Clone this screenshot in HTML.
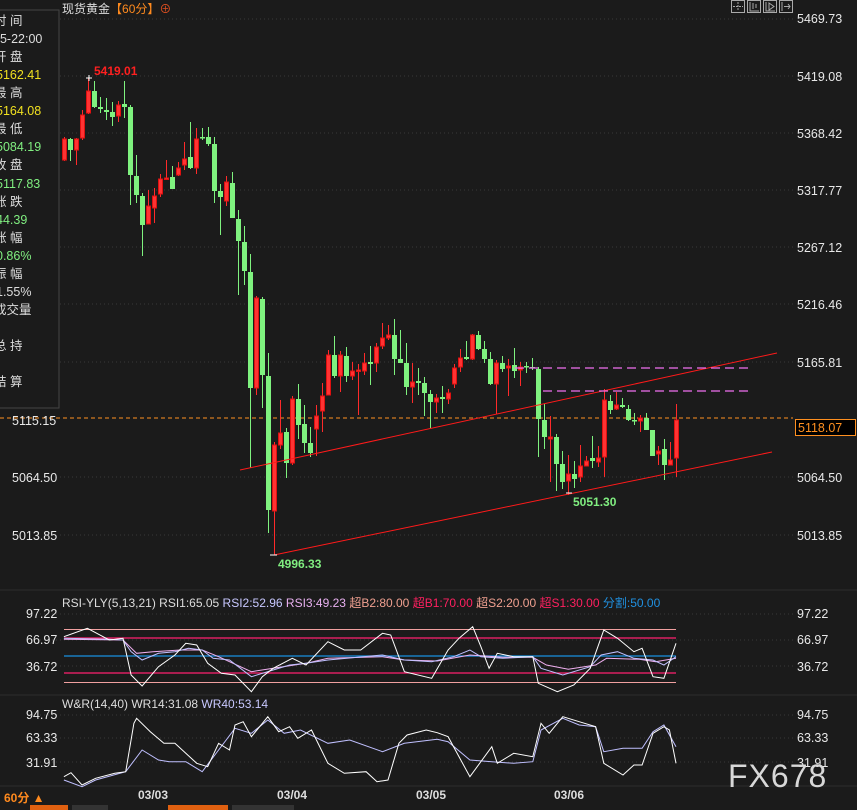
<!DOCTYPE html>
<html><head><meta charset="utf-8"><style>
html,body{margin:0;padding:0;background:#1b1b1b;}
body{width:857px;height:810px;overflow:hidden;position:relative;font-family:"Liberation Sans","Noto Sans CJK SC",sans-serif;}
svg{position:absolute;left:0;top:0;}
</style></head><body>
<svg id="s" width="857" height="810" xmlns="http://www.w3.org/2000/svg" font-family="Liberation Sans, Noto Sans CJK SC, sans-serif">
<rect width="857" height="810" fill="#1b1b1b"/>
<rect x="-2" y="10" width="61" height="398" fill="none" stroke="#444" stroke-width="1"/>
<g font-size="12.5" fill="#ddd">
<text x="-6" y="25">时 间</text>
<text x="-7" y="43">05-22:00</text>
<text x="-6" y="61">开 盘</text>
<text x="-4" y="79" fill="#f0e020">5162.41</text>
<text x="-6" y="97">最 高</text>
<text x="-4" y="115" fill="#f0e020">5164.08</text>
<text x="-6" y="133">最 低</text>
<text x="-4" y="151" fill="#80ee80">5084.19</text>
<text x="-6" y="169">收 盘</text>
<text x="-4" y="188" fill="#80ee80">5117.83</text>
<text x="-6" y="206">涨 跌</text>
<text x="-4" y="224" fill="#80ee80">44.39</text>
<text x="-6" y="242">涨 幅</text>
<text x="-4" y="260" fill="#80ee80">0.86%</text>
<text x="-6" y="278">振 幅</text>
<text x="-4" y="296">1.55%</text>
<text x="-6" y="314">成交量</text>
<text x="-4" y="332">-</text>
<text x="-6" y="350">总 持</text>
<text x="-4" y="368">-</text>
<text x="-6" y="386">结 算</text>
<text x="-4" y="404">-</text>
</g>
<text x="62" y="13" font-size="12" fill="#ddd">现货黄金<tspan fill="#ff8a1e">【60分】</tspan><tspan fill="#e05020">⊕</tspan></text>
<g stroke="#aaa" fill="none" stroke-width="1">
<rect x="731.5" y="0.5" width="13" height="12"/><rect x="747.5" y="0.5" width="13" height="12"/><rect x="763.5" y="0.5" width="13" height="12"/><rect x="779.5" y="0.5" width="13" height="12"/>
<path d="M738 2v9M733 6.5h10" stroke-dasharray="2,1"/>
<path d="M750 2v9h9M753 3v6M756 4v4"/>
<path d="M766 2v9h9M769 3l5 3.5-5 3.5z"/>
<path d="M782 2v9M784 6.5h6M788 4l2 2.5-2 2.5"/>
</g>
<g stroke="#3a3a3a" stroke-dasharray="1,3">
<line x1="60" y1="19" x2="793" y2="19"/><line x1="60" y1="76" x2="793" y2="76"/><line x1="60" y1="133" x2="793" y2="133"/><line x1="60" y1="190" x2="793" y2="190"/><line x1="60" y1="247" x2="793" y2="247"/><line x1="60" y1="304" x2="793" y2="304"/><line x1="60" y1="362" x2="793" y2="362"/><line x1="60" y1="477" x2="793" y2="477"/><line x1="60" y1="535" x2="793" y2="535"/>
<line x1="40" y1="614" x2="793" y2="614"/><line x1="40" y1="640" x2="793" y2="640"/><line x1="40" y1="666" x2="793" y2="666"/>
<line x1="40" y1="715" x2="793" y2="715"/><line x1="40" y1="738" x2="793" y2="738"/><line x1="40" y1="762" x2="793" y2="762"/>
</g>
<line x1="0" y1="418" x2="793" y2="418" stroke="#ff9020" stroke-dasharray="4,3"/>
<g font-size="12.5" fill="#e8e8e8">
<text x="797" y="23">5469.73</text><text x="797" y="81">5419.08</text><text x="797" y="138">5368.42</text><text x="797" y="195">5317.77</text><text x="797" y="252">5267.12</text><text x="797" y="309">5216.46</text><text x="797" y="367">5165.81</text><text x="797" y="482">5064.50</text><text x="797" y="540">5013.85</text>
<text x="12" y="425">5115.15</text><text x="12" y="482">5064.50</text><text x="12" y="540">5013.85</text>
</g>
<rect x="795.5" y="419.5" width="60" height="16" fill="#000" stroke="#ff9020"/>
<text x="798" y="432" font-size="12.5" fill="#ff9020">5118.07</text>
<g id="candles"></g>
<line x1="240" y1="470" x2="777" y2="353" stroke="#ff1a1a" stroke-width="1"/>
<line x1="274" y1="555" x2="772" y2="452" stroke="#ff1a1a" stroke-width="1"/>
<line x1="515" y1="368" x2="753" y2="368" stroke="#f070f0" stroke-width="1.3" stroke-dasharray="9,5"/>
<line x1="543" y1="391" x2="753" y2="391" stroke="#f070f0" stroke-width="1.3" stroke-dasharray="9,5"/>
<text x="94" y="75" font-size="12" font-weight="bold" fill="#ff2020">5419.01</text>
<text x="278" y="568" font-size="12" font-weight="bold" fill="#80ee80">4996.33</text>
<text x="573" y="506" font-size="12" font-weight="bold" fill="#80ee80">5051.30</text>
<path d="M86 78h6M89 75v6M270 555h7M566 493h6" stroke="#fff"/>
<line x1="0" y1="590" x2="857" y2="590" stroke="#2c2c2c"/>
<line x1="0" y1="695" x2="857" y2="695" stroke="#2c2c2c"/>
<line x1="0" y1="786" x2="857" y2="786" stroke="#2c2c2c"/>
<text x="62" y="607" font-size="12" fill="#ddd">RSI-YLY(5,13,21) RSI1:65.05 <tspan fill="#c8c8ff">RSI2:52.96</tspan> <tspan fill="#e8b0f0">RSI3:49.23</tspan> <tspan fill="#f0a090">超B2:80.00</tspan> <tspan fill="#ff2060">超B1:70.00</tspan> <tspan fill="#f0a090">超S2:20.00</tspan> <tspan fill="#ff2060">超S1:30.00</tspan> <tspan fill="#2090e0">分割:50.00</tspan></text>
<g font-size="12.5" fill="#e8e8e8">
<text x="26" y="618">97.22</text><text x="26" y="644">66.97</text><text x="26" y="671">36.72</text>
<text x="797" y="618">97.22</text><text x="797" y="644">66.97</text><text x="797" y="671">36.72</text>
<text x="26" y="719">94.75</text><text x="26" y="742">63.33</text><text x="26" y="767">31.91</text>
<text x="797" y="719">94.75</text><text x="797" y="742">63.33</text><text x="797" y="767">31.91</text>
</g>
<line x1="64" y1="629.5" x2="676" y2="629.5" stroke="#f0a0a0"/>
<line x1="64" y1="682.5" x2="676" y2="682.5" stroke="#f0a0a0"/>
<line x1="64" y1="638" x2="676" y2="638" stroke="#ff2070" stroke-width="1.3"/>
<line x1="64" y1="673" x2="676" y2="673" stroke="#ff2070" stroke-width="1.3"/>
<line x1="64" y1="656" x2="676" y2="656" stroke="#1890e0" stroke-width="1.3"/>
<g id="ind" fill="none"></g>
<text x="62" y="708" font-size="12" fill="#ddd">W&amp;R(14,40) WR14:31.08 <tspan fill="#c8c8ff">WR40:53.14</tspan></text>
<text x="728" y="787" font-size="32" fill="#d8d8d8" letter-spacing="1">FX678</text>
<g font-size="12" font-weight="bold" fill="#ddd">
<text x="138" y="799">03/03</text><text x="277" y="799">03/04</text><text x="416" y="799">03/05</text><text x="554" y="799">03/06</text>
</g>
<text x="4" y="802" font-size="12" font-weight="bold" fill="#ff8a1e">60分 ▲</text>
<rect x="30" y="805" width="38" height="5" fill="#e06010"/><rect x="72" y="805" width="36" height="5" fill="#333"/><rect x="168" y="805" width="60" height="5" fill="#e06010"/><rect x="232" y="805" width="62" height="5" fill="#333"/>
</svg>
<script>
var C=[
[64,'r',139,160,137,161],[70,'g',139,150,138,161],[76,'r',139,150,138,165],[82,'r',115,138,110,140],[88,'r',91,113,78,114],[94,'g',91,107,81,108],[100,'g',107,109,97,113],[106,'g',110,112,98,120],[112,'g',112,117,102,126],[118,'r',105,116,101,122],[124,'g',104,107,81,118],[130,'g',107,175,105,205],[136,'g',176,195,155,203],[142,'g',196,225,193,256],[148,'r',206,224,190,224],[154,'r',196,208,188,223],[160,'r',179,194,174,197],[166,'r',178,179,160,180],[172,'g',177,189,166,189],[178,'r',168,175,162,176],[184,'r',159,165,142,170],[190,'g',157,168,122,169],[196,'r',139,168,128,174],[202,'g',137,138,128,140],[208,'g',137,144,127,146],[214,'g',144,191,137,203],[220,'g',191,197,184,235],[226,'r',182,201,176,206],[232,'g',183,218,172,218],[238,'g',219,241,210,295],[244,'g',242,271,226,285],[250,'g',272,388,254,468],[256,'r',298,388,296,395],[262,'g',299,375,297,408],[268,'g',376,510,353,533],[274,'r',445,511,442,555],[280,'r',433,445,400,449],[286,'g',432,463,428,478],[292,'r',399,463,396,465],[298,'g',399,425,384,439],[304,'g',424,443,405,453],[310,'g',443,453,427,457],[316,'r',416,429,405,456],[322,'r',396,411,383,432],[328,'r',355,395,350,395],[334,'g',355,376,336,378],[340,'r',355,376,351,392],[346,'g',356,376,347,382],[352,'r',371,376,362,380],[358,'r',370,371,364,415],[364,'r',363,371,353,375],[370,'g',362,364,346,385],[376,'r',347,363,343,372],[382,'r',338,346,323,349],[388,'r',335,338,325,340],[394,'g',335,359,319,375],[400,'g',359,363,330,363],[406,'g',363,387,343,395],[412,'r',382,387,363,403],[418,'g',381,383,368,395],[424,'g',383,393,377,416],[430,'g',394,402,390,428],[436,'r',398,402,394,413],[442,'g',397,399,386,413],[448,'r',393,399,389,404],[454,'r',368,384,364,388],[460,'r',358,367,349,372],[466,'g',357,359,341,360],[472,'r',335,359,334,360],[478,'g',335,349,331,350],[484,'g',349,359,341,363],[490,'g',359,384,352,385],[496,'r',363,384,360,414],[502,'g',363,369,356,372],[508,'r',366,368,359,396],[514,'g',365,371,348,378],[520,'r',367,370,362,386],[526,'g',366,367,362,373],[532,'g',367,368,358,370],[538,'g',369,419,367,457],[544,'g',420,437,404,449],[550,'r',437,439,416,482],[556,'g',437,464,434,491],[562,'g',464,482,451,489],[568,'r',474,481,455,495],[574,'g',474,479,461,488],[580,'r',466,477,445,482],[586,'r',461,466,456,466],[592,'g',458,461,436,468],[598,'r',458,462,446,467],[604,'r',400,457,389,477],[610,'g',401,410,395,414],[616,'r',405,409,392,410],[622,'g',405,407,398,408],[628,'g',409,420,405,421],[634,'g',420,421,413,425],[640,'r',418,421,415,432],[646,'g',418,430,413,430],[652,'g',430,456,430,456],[658,'r',451,454,446,465],[664,'g',449,465,439,480],[670,'r',460,465,442,465],[676,'r',420,458,404,477]];
var h='';
C.forEach(function(c){var x=c[0],col=c[1]=='r'?'#ff2a2a':'#7ff27f';
h+='<line x1="'+(x+.5)+'" y1="'+c[4]+'" x2="'+(x+.5)+'" y2="'+c[5]+'" stroke="'+col+'"/>';
var t=c[2],b=Math.max(c[3],c[2]+1.5);
if(c[1]=='r')h+='<rect x="'+(x-1.5)+'" y="'+t+'" width="4" height="'+(b-t)+'" fill="#ff3333" stroke="#e01010" stroke-width="1"/>';
else h+='<rect x="'+(x-2)+'" y="'+t+'" width="5" height="'+(b-t)+'" fill="#7ff27f"/>';});
document.getElementById('candles').innerHTML=h;
function pl(p,c){var s='';for(var i=0;i<p.length;i+=2){s+=(p[i]/1.83).toFixed(1)+','+(580+p[i+1]/3).toFixed(1)+' ';}return '<polyline points="'+s+'" stroke="'+c+'" stroke-width="1"/>';}
var r1=[117,170,160,145,200,180,225,175,240,285,260,318,290,260,320,225,340,190,360,195,380,250,405,280,430,285,460,335,480,290,500,265,535,235,560,255,600,185,630,210,660,210,700,160,715,165,740,275,790,295,820,210,840,175,865,140,880,200,895,265,910,220,940,230,975,230,985,310,1020,335,1050,315,1080,265,1105,150,1130,175,1160,215,1175,205,1195,290,1215,295,1237,190];
var r2=[117,175,200,178,225,180,240,215,260,240,290,220,320,215,345,205,370,210,390,235,420,240,460,290,500,270,530,255,560,250,600,240,700,225,740,240,790,245,830,230,860,210,880,230,920,235,975,230,990,265,1030,285,1080,260,1100,225,1130,215,1160,235,1195,240,1215,255,1237,230];
var r3=[117,178,225,180,250,220,280,215,330,210,370,210,400,230,460,275,500,265,560,250,600,235,700,230,740,240,800,243,860,225,920,232,975,232,1000,255,1040,268,1090,255,1110,235,1170,238,1200,245,1237,235];
var w1=[117,590,130,578,150,615,175,595,210,580,230,575,245,430,250,415,275,455,300,490,320,490,340,520,360,550,380,560,400,490,420,510,430,435,445,425,460,470,490,410,510,455,530,440,545,475,570,450,600,550,630,580,670,575,690,605,710,600,730,490,745,465,780,450,800,458,820,470,860,590,900,500,910,550,940,520,975,530,990,430,1005,460,1030,410,1060,425,1090,440,1105,550,1140,585,1160,555,1175,555,1195,460,1215,440,1225,450,1237,550];
var w2=[117,600,150,620,175,600,230,575,260,510,290,540,310,545,340,545,370,575,400,510,430,445,460,460,490,420,520,460,550,450,600,490,640,480,700,515,740,490,800,478,820,485,860,540,900,545,940,550,975,545,990,450,1030,415,1060,435,1090,440,1105,515,1140,505,1175,505,1195,455,1215,435,1237,500];
document.getElementById('ind').innerHTML=pl(r3,'#f0b0f0')+pl(r2,'#c0c0ff')+pl(r1,'#ffffff')+pl(w2,'#c0c0ff')+pl(w1,'#ffffff');
</script>
</body></html>
